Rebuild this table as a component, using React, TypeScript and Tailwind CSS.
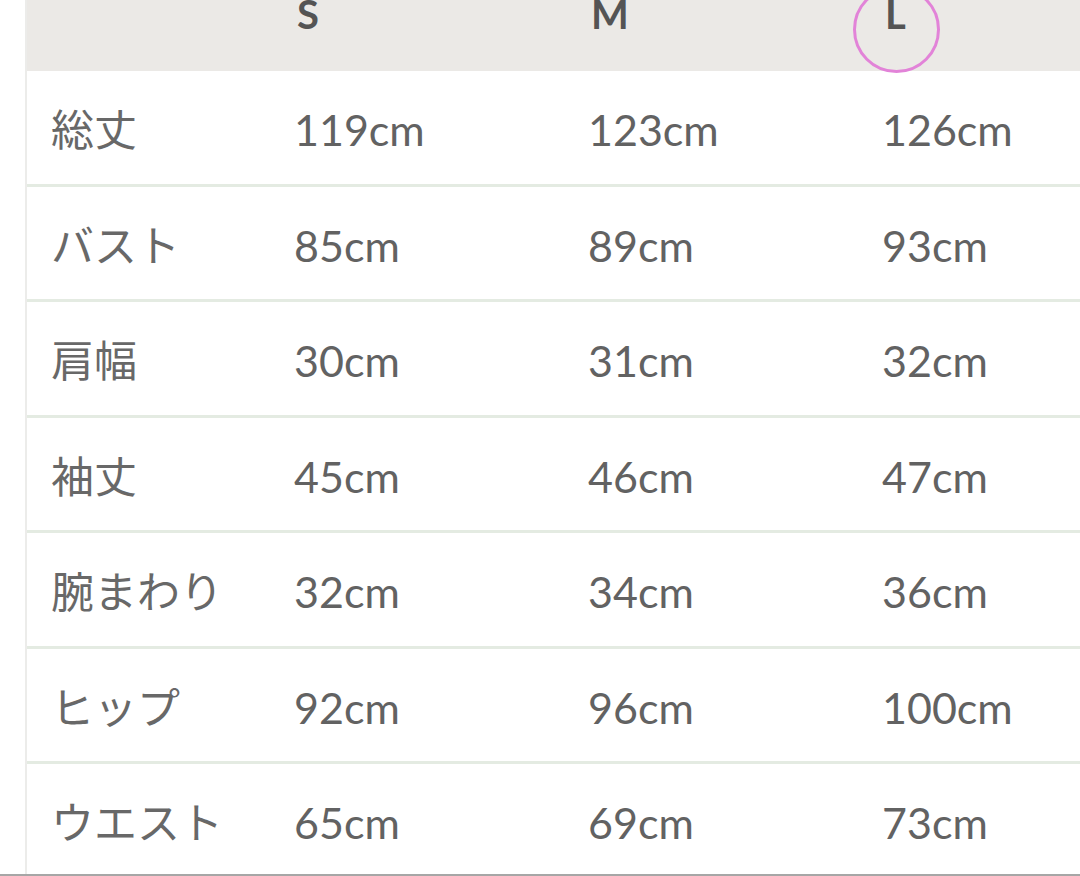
const sizes = ['S', 'M', 'L'];

const rows: { label: string; values: string[] }[] = [
  { label: '総丈', values: ['119cm', '123cm', '126cm'] },
  { label: 'バスト', values: ['85cm', '89cm', '93cm'] },
  { label: '肩幅', values: ['30cm', '31cm', '32cm'] },
  { label: '袖丈', values: ['45cm', '46cm', '47cm'] },
  { label: '腕まわり', values: ['32cm', '34cm', '36cm'] },
  { label: 'ヒップ', values: ['92cm', '96cm', '100cm'] },
  { label: 'ウエスト', values: ['65cm', '69cm', '73cm'] },
];

export default function App() {
  return (
    <div
      className="w-[1080px] h-[876px] flex flex-col overflow-hidden bg-white"
      style={{ fontFamily: 'Lato, "Noto Sans CJK JP", sans-serif' }}
    >
      <div className="flex-1 min-h-0 overflow-hidden pl-[25px]">
        <div className="relative h-full border-l-2 border-[#ececea] bg-white">
          {/* Header */}
          <div className="grid grid-cols-[267px_294px_294px_1fr] h-[71px] bg-[#ebe9e6] items-start">
            <div />
            {sizes.map((s) => (
              <span
                key={s}
                className="-mt-[6px] pl-[3px] text-[40px] leading-[40px] font-bold text-[#545454]"
              >
                {s}
              </span>
            ))}
          </div>

          {/* Rows */}
          {rows.map((row) => (
            <div
              key={row.label}
              className="grid grid-cols-[267px_294px_294px_1fr] h-[115.5px] border-b-[3px] border-[#e4ebe2] items-center pt-1.5"
            >
              <span className="pl-[24px] text-[43px] leading-[52px] text-[#686868]">
                {row.label}
              </span>
              {row.values.map((v, i) => (
                <span key={i} className="text-[43px] leading-[52px] text-[#626262]">
                  {v}
                </span>
              ))}
            </div>
          ))}

          {/* Hand-drawn mark around L */}
          <div className="absolute left-[826px] -top-[14px] w-[87px] h-[87px] rounded-full border-[3px] border-[#e283d8] pointer-events-none" />
        </div>
      </div>
      <div className="h-[2px] bg-[#a6a6a6]" />
    </div>
  );
}
